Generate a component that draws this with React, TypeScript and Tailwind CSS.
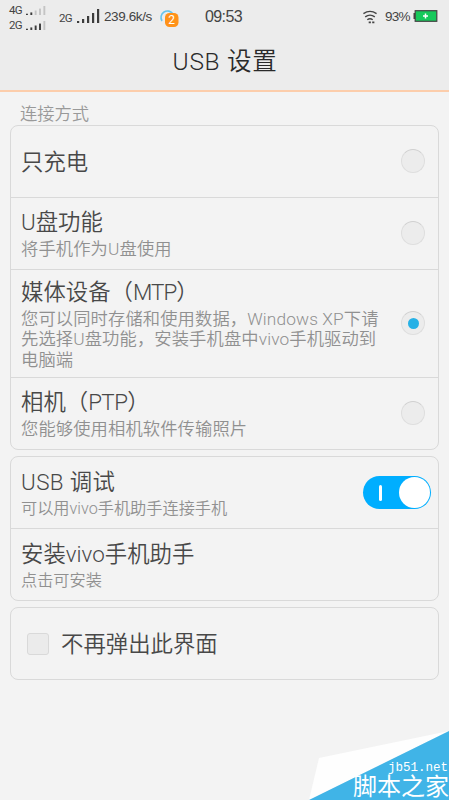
import React from 'react';
import clsx from 'clsx';

const Radio: React.FC<{ checked?: boolean }> = ({ checked }) => (
  <span className="w-6 h-6 mb-px shrink-0 rounded-full border border-[#dedede] border-t-[#cfcfcf] bg-[#ececec] flex items-center justify-center">
    {checked && <span className="w-[11px] h-[11px] rounded-full bg-[#26b1e6]" />}
  </span>
);

const Switch: React.FC = () => (
  <span className="w-[68px] h-[33px] shrink-0 rounded-full bg-[#00aeff] flex items-center justify-between pl-4 pr-px">
    <span className="w-[3px] h-4 rounded-sm bg-white" />
    <span className="w-[31px] h-[31px] rounded-full bg-white" />
  </span>
);

interface RowProps {
  title: React.ReactNode;
  lines?: string[];
  small?: boolean;
  className: string;
  children?: React.ReactNode;
}

const Row: React.FC<RowProps> = ({ title, lines = [], small, className, children }) => (
  <div className={clsx('flex items-center justify-between pl-[10px] border-[#d9d9d9]', className)}>
    <div className={clsx('whitespace-nowrap', small && 'pt-px')}>
      <div className={clsx('text-[22.4px] leading-[30px] text-[#484848]', lines.length > 0 && 'mb-[2px]')}>
        {title}
      </div>
      {lines.map((line) => (
        <div
          key={line}
          className={clsx(
            'leading-[20.5px] text-[#909090]',
            small ? 'text-[16.2px]' : 'text-[17.3px] tracking-[0.12px]'
          )}
        >
          {line}
        </div>
      ))}
    </div>
    {children}
  </div>
);

const Bars: React.FC<{ className: string; on: number }> = ({ className, on }) => (
  <svg className={className} viewBox="0 0 23 14" preserveAspectRatio="none">
    {[2, 4, 7, 10, 14].map((h, i) => (
      <rect key={h} x={i * 5} y={14 - h} width="2.2" height={h} fill={i < on ? '#3c3c3c' : '#c4c4c4'} />
    ))}
  </svg>
);

const StatusBar: React.FC = () => (
  <div className="h-[34px] flex items-center text-[#444] whitespace-nowrap font-normal">
    <div className="ml-[9px] w-[37px] text-[11.5px] leading-[15px] tracking-[-0.7px] pt-px">
      <div className="flex items-center justify-between">
        4G
        <Bars className="w-5 h-[9px]" on={2} />
      </div>
      <div className="flex items-center justify-between">
        2G
        <Bars className="w-5 h-[9px]" on={4} />
      </div>
    </div>
    <span className="ml-[13px] w-[18px] text-[11.5px] tracking-[-0.7px] pt-[3px]">2G</span>
    <Bars className="w-[23px] h-[14px] mb-[3px]" on={5} />
    <span className="ml-1 w-[49px] text-[13.5px] tracking-[-0.4px] font-['Liberation_Sans',sans-serif]">239.6k/s</span>
    <svg className="ml-[6px] w-5 h-5 mt-px" viewBox="0 0 20 20">
      <path d="M3 13A6.5 6.5 0 1 1 14 6" fill="none" stroke="#67c5ec" strokeWidth="1.6" />
      <rect x="6" y="5" width="13.5" height="14" rx="4.5" fill="#ff9219" />
      <text x="12.7" y="16.2" textAnchor="middle" fontSize="12" fill="#fff" fontFamily="Roboto">2</text>
    </svg>
    <span className="ml-[26px] w-[38px] text-[16px] tracking-[-0.6px] font-['Liberation_Sans',sans-serif]">09:53</span>
    <svg className="ml-[119px] w-4 h-[14px]" viewBox="0 0 17 16" fill="none" stroke="#444" strokeWidth="1.6">
      <path d="M1 4.2Q8.5-1 16 4.2M3 7.9Q8.5 3.8 14 7.9M5.4 11.2Q8.5 8.8 11.6 11.2" />
      <path d="M7 14h2.5M11 14h2.5" strokeWidth="2" />
    </svg>
    <span className="ml-[7px] w-[26px] text-[13.5px] tracking-[-0.7px] font-['Liberation_Sans',sans-serif]">93%</span>
    <svg className="ml-[2px] w-[25px] h-3 mb-[2px]" viewBox="0 0 24 12">
      <rect x="0" y="3" width="2" height="6" fill="#444" />
      <rect x="1.7" y="0.7" width="21.6" height="10.6" fill="#16c95b" stroke="#444" strokeWidth="1.2" />
      <path d="M12 3.5v5M9.5 6h5" stroke="#fff" strokeWidth="1.5" />
    </svg>
  </div>
);

const App: React.FC = () => {
  return (
    <div className="relative w-[449px] h-[800px] overflow-hidden bg-[#f3f3f3] font-[350] font-['Roboto','Noto_Sans_CJK_SC',sans-serif]">
      <header className="h-[92px] bg-[#ececec] border-b-2 border-[#fccdab]">
        <StatusBar />
        <h1 className="h-[54px] pl-px text-center text-[24.5px] leading-[56px] tracking-[0.7px] text-[#2a2a2a] whitespace-nowrap">
          USB 设置
        </h1>
      </header>

      <main className="px-[10px]">
        <h2 className="h-[33px] pl-[10px] pt-[9px] text-[17.3px] leading-[26px] text-[#999]">连接方式</h2>

        <section className="h-[325px] rounded-lg border border-[#d9d9d9]">
          <Row title="只充电" className="h-[72px] border-b pr-[13px]">
            <Radio />
          </Row>
          <Row title="U盘功能" lines={['将手机作为U盘使用']} className="h-[72px] border-b pr-[13px]">
            <Radio />
          </Row>
          <Row
            title={<>媒体设备（<span className="tracking-[-1px]">MTP</span>）</>}
            lines={['您可以同时存储和使用数据，Windows XP下请', '先选择U盘功能，安装手机盘中vivo手机驱动到', '电脑端']}
            className="h-[108px] border-b pr-[13px]"
          >
            <Radio checked />
          </Row>
          <Row
            title={<>相机（<span className="tracking-[-0.6px]">PTP</span>）</>}
            lines={['您能够使用相机软件传输照片']}
            className="h-[71px] pr-[13px]"
          >
            <Radio />
          </Row>
        </section>

        <section className="mt-[6px] h-[145px] rounded-lg border border-[#d9d9d9]">
          <Row
            title={<span className="tracking-[0.4px]">USB 调试</span>}
            lines={['可以用vivo手机助手连接手机']}
            small
            className="h-[72px] border-b pr-[7px]"
          >
            <Switch />
          </Row>
          <Row title="安装vivo手机助手" lines={['点击可安装']} small className="h-[71px]" />
        </section>

        <section className="mt-[6px] h-[73px] rounded-lg border border-[#d9d9d9] flex items-center pl-4">
          <span className="w-[22px] h-[22px] rounded-[3px] border border-[#d9d9d9] bg-[#ebebeb]" />
          <span className="ml-3 text-[22.4px] leading-[30px] text-[#484848]">不再弹出此界面</span>
        </section>
      </main>

      {/* corner site mark */}
      <div className="absolute right-0 bottom-0 w-[140px] h-[69px] text-white text-right font-normal">
        <svg className="absolute inset-0 w-full h-full" viewBox="0 0 140 69">
          <path d="M0 69L10 27L140 0Z" fill="#fefefe" />
          <path d="M0 69L140 0V69Z" fill="#40b4e7" />
        </svg>
        <div className="relative pt-[29px] pr-px text-[12.5px] leading-4 font-['Liberation_Mono',monospace]">jb51.net</div>
        <div className="relative text-[24px] leading-6 -mt-px">脚本之家</div>
      </div>
    </div>
  );
};

export default App;
